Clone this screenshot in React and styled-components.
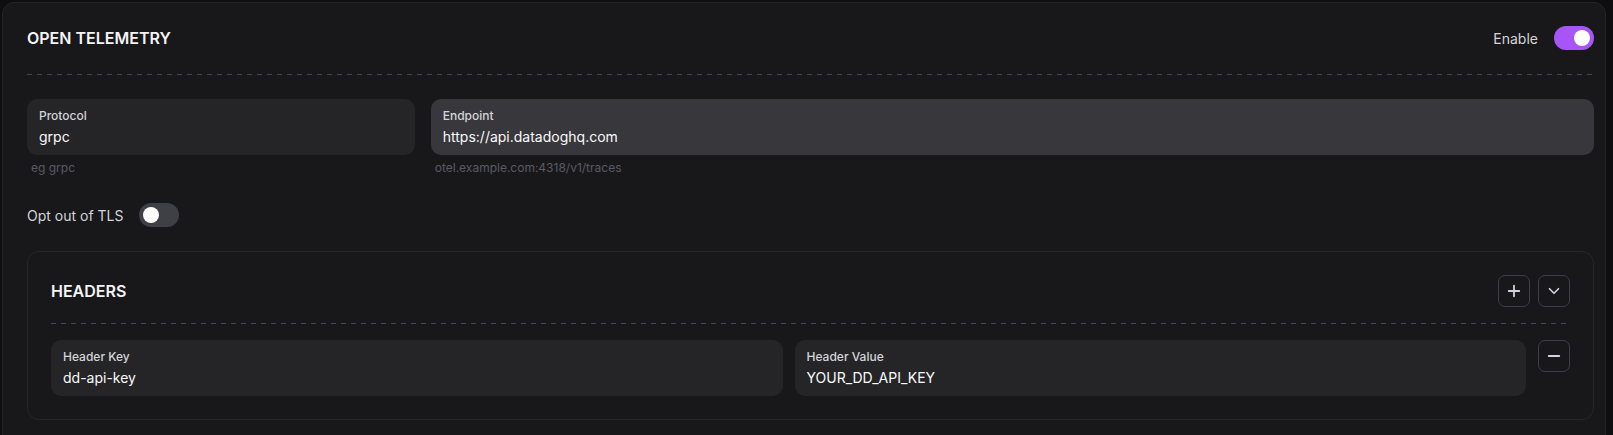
import React from 'react'
import styled, { createGlobalStyle } from 'styled-components'
import { Plus, Minus, ChevronDown } from 'lucide-react'

const GlobalStyle = createGlobalStyle`
    html, body {
        margin: 0;
        padding: 0;
        background: #0e0e10;
        font-family: Inter, "Noto Sans", sans-serif;
        color: #fafafa;
    }
    * {
        box-sizing: border-box;
    }
`

const Page = styled.div`
    padding: 2px 7px 0 2px;
`

const Card = styled.section`
    background: #18181b;
    border: 1px solid #232326;
    border-radius: 12px;
    padding: 23px 11px 40px 24px;
    display: flex;
    flex-direction: column;
`

const TopRow = styled.div`
    display: flex;
    align-items: center;
    justify-content: space-between;
    height: ${props => props.tall ? '32px' : '24px'};
`

const Title = styled.h2`
    margin: 0;
    font-size: 16px;
    font-weight: 600;
    color: #f4f4f5;
`

const Inline = styled.div`
    display: flex;
    align-items: center;
    gap: ${props => props.gap || 16}px;
`

const SwitchLabel = styled.span`
    font-size: 14px;
    color: #d4d4d8;
`

const Track = styled.div`
    width: 40px;
    height: 24px;
    border-radius: 12px;
    background: ${props => props.on ? '#a855f7' : '#3f3f46'};
    display: flex;
    align-items: center;
    justify-content: ${props => props.on ? 'flex-end' : 'flex-start'};
    padding: 0 4px;
`

const Knob = styled.div`
    width: 16px;
    height: 16px;
    border-radius: 50%;
    background: #ffffff;
`

const Divider = styled.div`
    height: 1px;
    margin: ${props => props.space}px 0;
    background: repeating-linear-gradient(to right, #45454c 0 5px, transparent 5px 10px);
`

const FieldGrid = styled.div`
    display: grid;
    grid-template-columns: ${props => props.cols};
    gap: ${props => props.gap}px;
    align-items: start;
`

const Field = styled.div`
    height: 56px;
    border-radius: 10px;
    background: ${props => props.active ? '#37373c' : '#252528'};
    padding: 9px 12px 0 12px;
    display: flex;
    flex-direction: column;
`

const Label = styled.span`
    font-size: 12px;
    line-height: 16px;
    font-weight: 500;
    color: #d4d4d8;
`

const Value = styled.span`
    margin-top: 3px;
    font-size: 14px;
    line-height: 20px;
    color: #fafafa;
`

const Hint = styled.div`
    margin-top: 5px;
    padding-left: 4px;
    font-size: 12px;
    line-height: 16px;
    color: #5a5a62;
`

const OptRow = styled(Inline)`
    margin-top: 27px;
    height: 24px;
`

const HeadersBox = styled.div`
    margin-top: 24px;
    border: 1px solid #27272a;
    border-radius: 12px;
    padding: 23px;
`

const IconButton = styled.button`
    width: 32px;
    height: 32px;
    border: 1px solid #3f3f46;
    border-radius: 7px;
    background: transparent;
    color: #d4d4d8;
    display: flex;
    align-items: center;
    justify-content: center;
    padding: 0;
    cursor: pointer;
`

const Switch = ({ on }) => (
    <Track on={on}>
        <Knob />
    </Track>
)

const InputField = ({ label, value, hint, active }) => (
    <div>
        <Field active={active}>
            <Label>{label}</Label>
            <Value>{value}</Value>
        </Field>
        {hint && <Hint>{hint}</Hint>}
    </div>
)

const App = () => {
  return (
    <Page>
        <GlobalStyle />
        <Card>
            <TopRow>
                <Title>OPEN TELEMETRY</Title>
                <Inline>
                    <SwitchLabel>Enable</SwitchLabel>
                    <Switch on />
                </Inline>
            </TopRow>
            <Divider space={24} />
            <FieldGrid cols="1fr 3fr" gap={16}>
                <InputField label="Protocol" value="grpc" hint="eg grpc" />
                <InputField label="Endpoint" value="https://api.datadoghq.com" hint="otel.example.com:4318/v1/traces" active />
            </FieldGrid>
            <OptRow>
                <SwitchLabel>Opt out of TLS</SwitchLabel>
                <Switch />
            </OptRow>
            <HeadersBox>
                <TopRow tall>
                    <Title>HEADERS</Title>
                    <Inline gap={8}>
                        <IconButton><Plus size={18} strokeWidth={2.4} /></IconButton>
                        <IconButton><ChevronDown size={18} strokeWidth={2.2} /></IconButton>
                    </Inline>
                </TopRow>
                <Divider space={16} />
                <FieldGrid cols="1fr 1fr 32px" gap={12}>
                    <InputField label="Header Key" value="dd-api-key" />
                    <InputField label="Header Value" value="YOUR_DD_API_KEY" />
                    <IconButton><Minus size={18} strokeWidth={2.4} /></IconButton>
                </FieldGrid>
            </HeadersBox>
        </Card>
    </Page>
  )
}

export default App
